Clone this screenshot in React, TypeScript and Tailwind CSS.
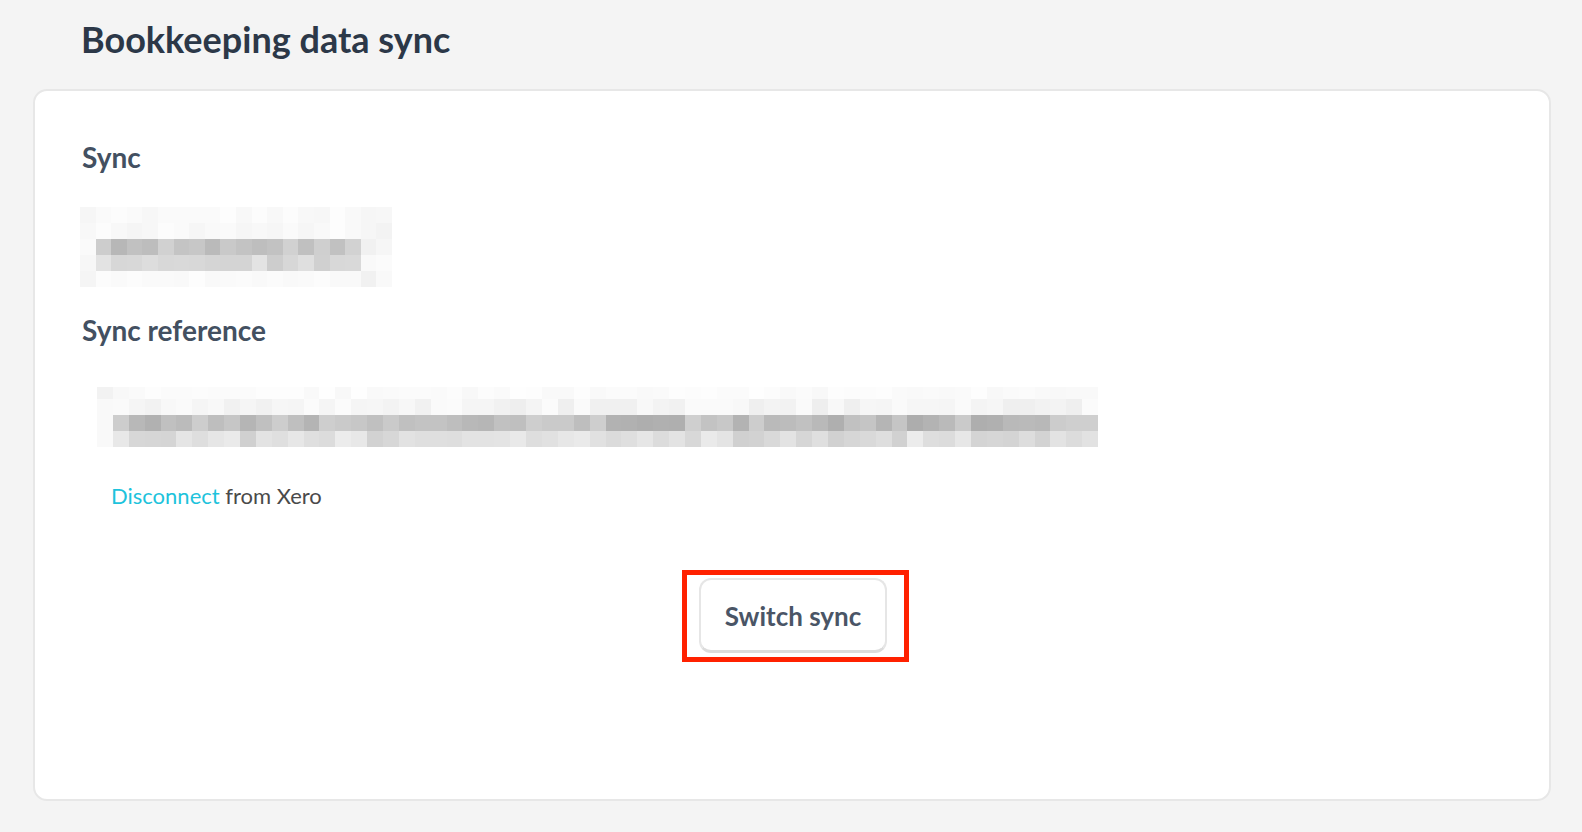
import React from 'react';

// deterministic grey values for the pixelated (redacted) rows
const shade = (seed: number, lo: number, hi: number) => {
  const r = Math.abs(Math.sin(seed * 12.9898) * 43758.5453) % 1;
  const v = Math.round(lo + r * (hi - lo));
  return `rgb(${v},${v},${v})`;
};

type Row = { h: number; lo: number; hi: number };

const Redacted: React.FC<{ cols: number; rows: Row[]; seed: number; faint?: number[] }> = ({
  cols,
  rows,
  seed,
  faint = [],
}) => (
  <div className="flex flex-col">
    {rows.map((row, ri) => (
      <div key={ri} className="flex" style={{ height: row.h }}>
        {Array.from({ length: cols }).map((_, ci) => {
          const edge = faint.includes(ci);
          return (
            <div
              key={ci}
              className="flex-1"
              style={{
                backgroundColor: edge
                  ? shade(seed + ri * 17 + ci, 240, 251)
                  : shade(seed + ri * 131 + ci * 7.3, row.lo, row.hi),
              }}
            />
          );
        })}
      </div>
    ))}
  </div>
);

const App: React.FC = () => {
  return (
    <div className="min-h-[832px] bg-[#f4f4f4] font-[Lato,sans-serif] pb-[32px]">
      <h1 className="pl-[81px] pt-[18px] text-[36px] leading-[1.2] font-bold text-[#2c3848]">
        Bookkeeping data sync
      </h1>

      <div className="ml-[33px] mr-[31px] mt-[28px] h-[712px] rounded-[14px] border-2 border-[#e7e7e7] bg-white pl-[47px] pt-[50px]">
        <h2 className="text-[28px] leading-[1.2] font-bold text-[#435061]">Sync</h2>

        <div className="mt-[32px] -ml-[2px] w-[312px]">
          <Redacted
            cols={20}
            seed={3}
            faint={[0, 18, 19]}
            rows={[
              { h: 16, lo: 247, hi: 253 },
              { h: 16, lo: 245, hi: 254 },
              { h: 16, lo: 182, hi: 212 },
              { h: 16, lo: 204, hi: 228 },
              { h: 16, lo: 248, hi: 253 },
            ]}
          />
        </div>

        <h2 className="mt-[27px] text-[28px] leading-[1.2] font-bold text-[#435061]">Sync reference</h2>

        <div className="mt-[40px] ml-[15px] w-[1001px]">
          <Redacted
            cols={63}
            seed={11}
            faint={[0]}
            rows={[
              { h: 12, lo: 248, hi: 254 },
              { h: 16, lo: 238, hi: 252 },
              { h: 16, lo: 172, hi: 208 },
              { h: 16, lo: 208, hi: 236 },
            ]}
          />
        </div>

        <p className="mt-[36px] ml-[29px] text-[22px] leading-[1.2] text-[#4a4a4a]">
          <span className="text-[#1ec3dc]">Disconnect</span> from Xero
        </p>

        <div className="mt-[60px] -ml-[47px] flex justify-center">
          <div className="ml-[7px] border-[5px] border-[#ff2100] pl-[12px] pr-[17px] pt-[3px] pb-[4px]">
            <button className="h-[75px] w-[188px] rounded-[12px] border-2 border-b-[3px] border-[#e6e6e6] border-b-[#dcdcdc] bg-white pt-[3px] text-[26px] font-bold text-[#4a5566]">
              Switch sync
            </button>
          </div>
        </div>
      </div>
    </div>
  );
};

export default App;
